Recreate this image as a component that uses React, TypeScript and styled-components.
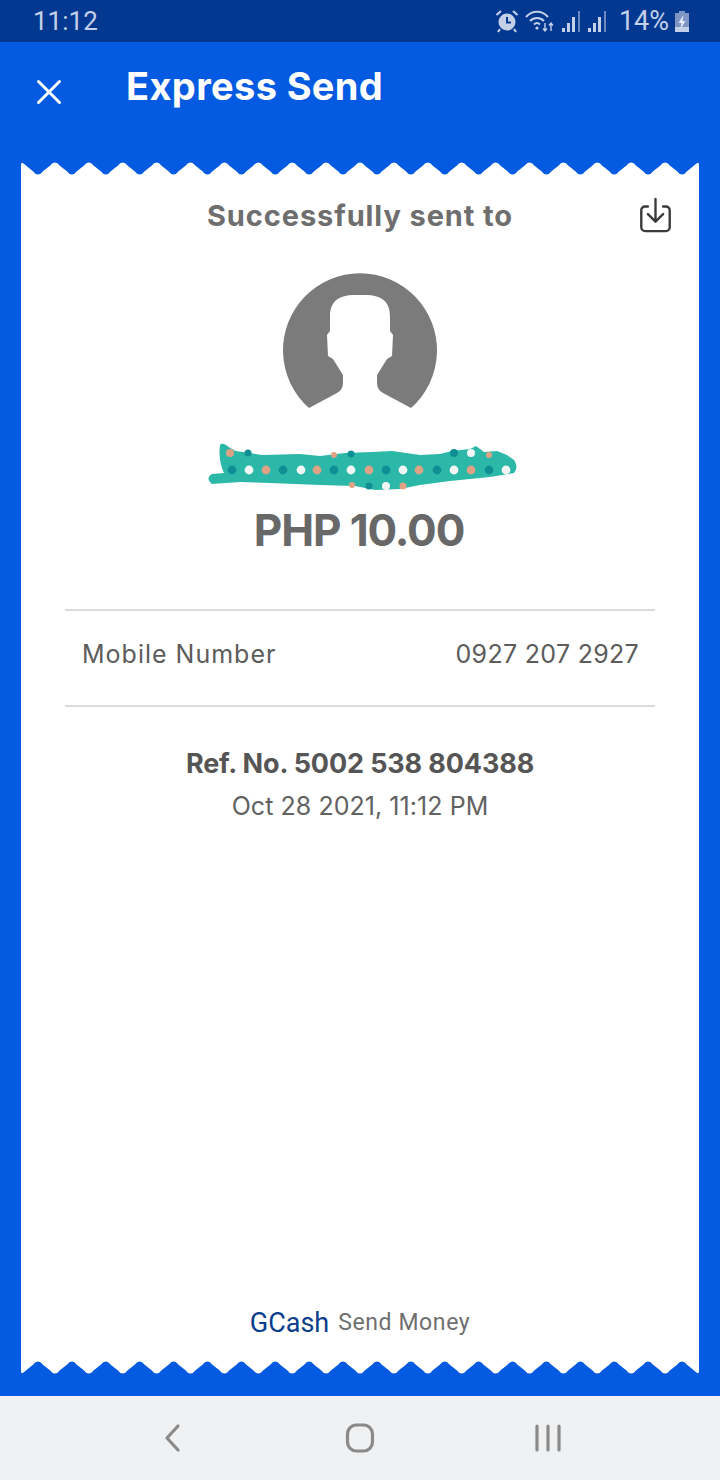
import React from 'react'
import styled, { createGlobalStyle } from 'styled-components'

const Global = createGlobalStyle`
  html, body { margin: 0; padding: 0; background: #045ae0; }
  * { box-sizing: border-box; }
`

const Screen = styled.div`
  width: 720px;
  height: 1480px;
  display: flex;
  flex-direction: column;
  background: #045ae0;
  font-family: 'Inter', 'Liberation Sans', sans-serif;
  overflow: hidden;
`

const StatusBar = styled.div`
  height: 42px;
  flex: none;
  background: #02388f;
  color: #c3d0e8;
  display: flex;
  align-items: center;
  justify-content: space-between;
  padding: 0 31px 0 33px;
  font-family: 'Roboto', sans-serif;
  font-size: 26px;
`

const StatusIcons = styled.div`
  display: flex;
  align-items: center;
  gap: 6px;
  font-size: 27px;
`

const Percent = styled.span`
  margin-left: 6px;
`

const Header = styled.div`
  height: 118px;
  flex: none;
  display: flex;
  align-items: flex-start;
  padding: 21px 0 0 36px;
  color: #fff;
`

const CloseBtn = styled.div`
  width: 90px;
  padding-top: 16px;
  display: flex;
`

const Title = styled.div`
  font-size: 38px;
  line-height: 46px;
  font-weight: 700;
  letter-spacing: 0.35px;
`

const Receipt = styled.div`
  flex: 1;
  margin: 0 21px;
  display: flex;
  flex-direction: column;
`

const Sheet = styled.div`
  flex: 1;
  background: #fff;
  display: flex;
  flex-direction: column;
  align-items: center;
  padding: 0 44px 21px;
  position: relative;
`

const SentRow = styled.div`
  width: 100%;
  text-align: center;
  font-size: 29px;
  line-height: 36px;
  font-weight: 700;
  color: #6e6e6e;
  letter-spacing: 0.9px;
  margin-top: 22px;
`

const SaveIcon = styled.div`
  position: absolute;
  top: 21px;
  right: 27px;
  display: flex;
`

const Avatar = styled.div`
  margin-top: 39px;
  height: 136px;
  display: flex;
`

const Scribble = styled.div`
  margin-top: 34px;
  height: 48px;
  display: flex;
`

const Amount = styled.div`
  margin-top: 12px;
  padding-right: 2px;
  font-size: 44px;
  line-height: 54px;
  font-weight: 700;
  color: #686868;
  letter-spacing: -1.1px;
`

const InfoRow = styled.div`
  width: 100%;
  margin-top: 52px;
  height: 98px;
  border-top: 2px solid #dcdcdc;
  border-bottom: 2px solid #dcdcdc;
  display: flex;
  align-items: center;
  justify-content: space-between;
  padding: 0 16px 8px 17px;
  font-size: 25px;
  color: #5c5c5c;
`

const InfoLabel = styled.span`
  letter-spacing: 1px;
`

const InfoValue = styled.span`
  letter-spacing: 0.3px;
`

const RefNo = styled.div`
  margin-top: 39px;
  font-size: 27px;
  line-height: 36px;
  font-weight: 700;
  color: #555;
  letter-spacing: -0.13px;
`

const DateLine = styled.div`
  margin-top: 7px;
  font-size: 25px;
  line-height: 34px;
  color: #626262;
  letter-spacing: 0.05px;
`

const Footer = styled.div`
  margin-top: auto;
  display: flex;
  align-items: baseline;
  gap: 9px;
  font-family: 'Roboto', sans-serif;
`

const Brand = styled.span`
  font-size: 27px;
  color: #0a3d8c;
`

const FooterText = styled.span`
  font-size: 23px;
  color: #6f6f6f;
  letter-spacing: 0.6px;
  position: relative;
  top: -2px;
`

const BottomGap = styled.div`
  height: 20px;
  flex: none;
`

const NavBar = styled.div`
  height: 84px;
  flex: none;
  background: #f0f1f3;
  display: grid;
  grid-template-columns: repeat(3, 188px);
  justify-content: center;
  align-items: center;
`

const NavSlot = styled.div`
  display: flex;
  justify-content: center;
`

const ZigWrap = styled.svg<{ $flip?: boolean }>`
  display: block;
  width: 678px;
  height: 16px;
  flex: none;
  transform: ${(p) => (p.$flip ? 'scaleY(-1)' : 'none')};
`

// 20 teeth across the sheet, half a tooth at each corner
const STEP = 33.9
const toothPath = () => {
  let d = 'M0 16 L0 4.5 Q0 1.5 2.5 3.5 '
  for (let k = 0; k < 20; k++) {
    const v = k * STEP + STEP / 2
    d += `L${v - 5} 11.2 Q${v} 18 ${v + 5} 11.2 `
    if (k < 19) {
      const p = (k + 1) * STEP
      d += `L${p - 5} 5.8 Q${p} -1 ${p + 5} 5.8 `
    }
  }
  d += 'L675.5 3.5 Q678 1.5 678 4.5 L678 16 Z'
  return d
}

function Zigzag({ flip }: { flip?: boolean }) {
  return (
    <ZigWrap viewBox="0 0 678 16" $flip={flip}>
      <path d={toothPath()} fill="#fff" />
    </ZigWrap>
  )
}

const dots = [232, 249, 266, 283, 301, 317, 334, 351, 369, 386, 403, 419, 437, 454, 471, 489, 506]
const dotColors = ['#0f8f94', '#f2f6f4', '#e0a284']

const extraDots = [
  { x: 230, y: 453, r: 4, c: '#e0a284' },
  { x: 248, y: 453, r: 3.5, c: '#0f8f94' },
  { x: 334, y: 455, r: 3, c: '#e0a284' },
  { x: 351, y: 454, r: 3.5, c: '#0f8f94' },
  { x: 454, y: 453, r: 4, c: '#0f8f94' },
  { x: 471, y: 453, r: 4, c: '#f2f6f4' },
  { x: 489, y: 455, r: 3, c: '#e0a284' },
  { x: 352, y: 485, r: 3, c: '#e0a284' },
  { x: 369, y: 486, r: 3.5, c: '#0f8f94' },
  { x: 386, y: 486, r: 4, c: '#f2f6f4' },
  { x: 403, y: 486, r: 3.5, c: '#e0a284' },
]

function Smudge() {
  return (
    <svg width="316" height="48" viewBox="202 443 316 48">
      <path
        d="M220 445 C224 441 228 448 236 451 L262 455 L300 454 L320 456 L345 453 L372 452 L392 451 L420 455 L440 454 L452 451 L470 449 L476 446 L484 452 L497 451 L507 455 L514 460 Q519 467 514 473 L490 477 L450 481 L420 485 L400 489 L375 490 L355 486 L320 485 L270 483 L240 482 L212 484 Q205 478 212 474 L224 473 Q218 460 220 445 Z"
        fill="#2cb8a8"
      />
      {dots.map((x, i) => (
        <circle key={x} cx={x} cy={470} r={4.4} fill={dotColors[i % 3]} />
      ))}
      {extraDots.map((d) => (
        <circle key={`${d.x}-${d.y}`} cx={d.x} cy={d.y} r={d.r} fill={d.c} />
      ))}
    </svg>
  )
}

function SignalIcon() {
  return (
    <svg width="20" height="24" viewBox="0 0 20 24" fill="#c3d0e8">
      <rect x="1" y="19" width="3" height="4" />
      <rect x="6" y="14" width="3" height="9" />
      <rect x="11" y="8" width="3" height="15" />
      <rect x="17" y="2" width="2" height="21" opacity="0.55" />
    </svg>
  )
}

export default function App() {
  return (
    <Screen>
      <Global />
      <StatusBar>
        <span>11:12</span>
        <StatusIcons>
          <svg width="24" height="24" viewBox="0 0 24 24">
            <circle cx="12" cy="13" r="8.5" fill="#c3d0e8" />
            <path d="M12 8v5.5h4" stroke="#02388f" strokeWidth="2" fill="none" />
            <path d="M1.5 6 6 2M22.5 6 18 2M5 20l-2 3M19 20l2 3" stroke="#c3d0e8" strokeWidth="2.2" />
          </svg>
          <svg width="30" height="24" viewBox="0 0 30 24" fill="none" stroke="#c3d0e8" strokeWidth="2">
            <path d="M1 8c6-7 16-7 22 0M5 12c4-4 10-4 14 0M9 15.5c2-2 4-2 6 0" />
            <circle cx="12" cy="19" r="1.6" fill="#c3d0e8" stroke="none" />
            <path d="M20 14v8M18 19.5l2 2.5 2-2.5M26 22v-8M24 16.5l2-2.5 2 2.5" strokeWidth="1.4" />
          </svg>
          <SignalIcon />
          <SignalIcon />
          <Percent>14%</Percent>
          <svg width="14" height="24" viewBox="0 0 14 24">
            <path d="M4 2h6v2h4v19H0V4h4z" fill="#7f95c4" />
            <path d="M0 18h14v5H0z" fill="#c3d0e8" />
            <path d="M8.5 6 3.5 14h3l-1 6 5-8h-3z" fill="#e5ecf6" />
          </svg>
        </StatusIcons>
      </StatusBar>
      <Header>
        <CloseBtn>
          <svg width="26" height="26" viewBox="0 0 26 26" stroke="#fff" strokeWidth="3" strokeLinecap="round">
            <path d="M2.5 2.5l21 21M23.5 2.5l-21 21" />
          </svg>
        </CloseBtn>
        <Title>Express Send</Title>
      </Header>
      <Receipt>
        <Zigzag />
        <Sheet>
          <SentRow>Successfully sent to</SentRow>
          <SaveIcon>
            <svg width="33" height="36" viewBox="0 0 34 38" fill="none" stroke="#3a3a3a" strokeWidth="2.5" strokeLinecap="round" strokeLinejoin="round">
              <path d="M9 10H6a4 4 0 0 0-4 4v18a4 4 0 0 0 4 4h22a4 4 0 0 0 4-4V14a4 4 0 0 0-4-4h-3" />
              <path d="M17 2v24M9 18l8 8 8-8" />
            </svg>
          </SaveIcon>
          <Avatar>
            <svg width="156" height="136" viewBox="0 0 156 136">
              <path
                d="M27 135 A77 77 0 1 1 129 135 L101 120 Q95 117 95 110 L95 102 L105 86 L110 83 L111 62 L108 58 L108 44 C108 30 102 22 82 22 L74 22 C54 22 48 30 48 44 L48 58 L45 62 L46 83 L51 86 L61 102 L61 110 Q61 117 55 120 Z"
                fill="#7b7b7b"
              />
            </svg>
          </Avatar>
          <Scribble>
            <Smudge />
          </Scribble>
          <Amount>PHP 10.00</Amount>
          <InfoRow>
            <InfoLabel>Mobile Number</InfoLabel>
            <InfoValue>0927 207 2927</InfoValue>
          </InfoRow>
          <RefNo>Ref. No. 5002 538 804388</RefNo>
          <DateLine>Oct 28 2021, 11:12 PM</DateLine>
          <Footer>
            <Brand>GCash</Brand>
            <FooterText>Send Money</FooterText>
          </Footer>
        </Sheet>
        <Zigzag flip />
      </Receipt>
      <BottomGap />
      <NavBar>
        <NavSlot>
          <svg width="20" height="30" viewBox="0 0 20 30" fill="none" stroke="#8a8a8a" strokeWidth="3.2" strokeLinecap="round" strokeLinejoin="round">
            <path d="M16 3 5 15l11 12" />
          </svg>
        </NavSlot>
        <NavSlot>
          <svg width="30" height="30" viewBox="0 0 30 30" fill="none" stroke="#8a8a8a" strokeWidth="3.2">
            <rect x="2.5" y="2" width="25" height="26" rx="9" />
          </svg>
        </NavSlot>
        <NavSlot>
          <svg width="28" height="28" viewBox="0 0 28 28" stroke="#8a8a8a" strokeWidth="3.2" strokeLinecap="round">
            <path d="M3 2v24M14 2v24M25 2v24" />
          </svg>
        </NavSlot>
      </NavBar>
    </Screen>
  )
}
